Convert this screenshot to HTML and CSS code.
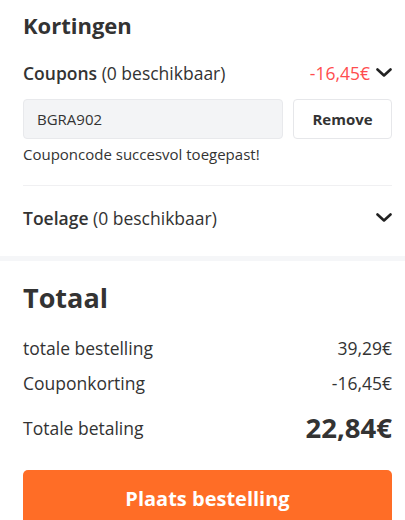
FILE: index.html
```html
<!DOCTYPE html>
<html lang="nl">
<head>
<meta charset="utf-8">
<link rel="stylesheet" href="styles.css">
</head>
<body>
<section class="discounts">
  <h2 class="title">Kortingen</h2>
  <div class="row coupon-head">
    <div class="label"><b>Coupons</b> (0 beschikbaar)</div>
    <div class="right">
      <span class="neg">-16,45€</span>
      <svg class="chev" width="16" height="10" viewBox="0 0 16 10"><path d="M1.5 1.5 L8 7.5 L14.5 1.5" fill="none" stroke="#222" stroke-width="2.6" stroke-linecap="round" stroke-linejoin="round"/></svg>
    </div>
  </div>
  <div class="coupon-form">
    <div class="code">BGRA902</div>
    <button class="remove">Remove</button>
  </div>
  <p class="success">Couponcode succesvol toegepast!</p>
  <div class="row allowance">
    <div class="label"><b>Toelage</b> (0 beschikbaar)</div>
    <svg class="chev" width="16" height="10" viewBox="0 0 16 10"><path d="M1.5 1.5 L8 7.5 L14.5 1.5" fill="none" stroke="#222" stroke-width="2.6" stroke-linecap="round" stroke-linejoin="round"/></svg>
  </div>
</section>
<section class="total">
  <h2 class="big-title">Totaal</h2>
  <div class="row line first"><span>totale bestelling</span><span>39,29€</span></div>
  <div class="row line"><span>Couponkorting</span><span>-16,45€</span></div>
  <div class="row line grand"><span>Totale betaling</span><span class="amount">22,84€</span></div>
  <button class="order">Plaats bestelling</button>
</section>
</body>
</html>
```
FILE: styles.css
```css
* { box-sizing: border-box; }
html, body { margin: 0; padding: 0; }
body {
  font-family: "Open Sans", "Liberation Sans", sans-serif;
  color: #333;
  background: #fff;
  width: 405px;
  overflow: hidden;
}
.discounts {
  padding: 9px 13px 6px 23px;
  border-bottom: 5px solid #f5f6f8;
}
.title {
  margin: 0;
  font-size: 22px;
  font-weight: 700;
  line-height: 32px;
}
.row {
  display: flex;
  justify-content: space-between;
  align-items: center;
}
.coupon-head {
  margin-top: 20px;
  height: 24px;
  font-size: 17.5px;
}
.label b { font-weight: 600; }
.right { display: flex; align-items: center; gap: 6px; }
.neg { color: #ff4d4f; }
.chev { display: block; }
.coupon-form {
  display: flex;
  gap: 10px;
  margin-top: 14px;
}
.code {
  flex: 1;
  height: 40px;
  background: #f3f4f6;
  border: 1px solid #e8e9ec;
  border-radius: 4px;
  font-size: 15px;
  line-height: 38px;
  padding-left: 13px;
}
.remove {
  width: 99px;
  height: 40px;
  background: #fff;
  border: 1px solid #e6e7ea;
  border-radius: 4px;
  font-family: inherit;
  font-size: 15px;
  font-weight: 700;
  color: #333;
  padding: 0;
}
.success {
  margin: 5px 0 0;
  font-size: 15px;
  line-height: 20px;
  padding-bottom: 21px;
  border-bottom: 1px solid #f0f0f2;
}
.allowance {
  height: 64px;
  font-size: 17.5px;
}
.total {
  padding: 19px 13px 0 23px;
}
.big-title {
  margin: 0;
  font-size: 27px;
  font-weight: 700;
  line-height: 36px;
}
.line {
  font-size: 17.5px;
  height: 35px;
}
.line.first { margin-top: 14px; }
.grand { height: 55px; }
.amount { font-size: 27.5px; font-weight: 700; }
.order {
  display: block;
  width: 100%;
  margin-top: 15px;
  height: 56px;
  border: 0;
  border-radius: 5px;
  background: #ff6d26;
  color: #fff;
  font-family: inherit;
  font-size: 20px;
  font-weight: 700;
  padding: 0;
}
```
